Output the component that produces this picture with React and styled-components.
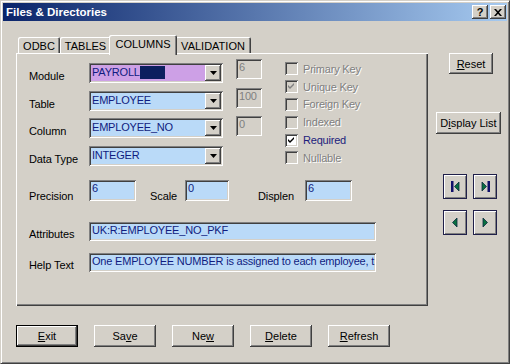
import React from 'react';
import styled, { createGlobalStyle, css } from 'styled-components';

const GlobalStyle = createGlobalStyle`
    body{
        margin:0;
        background:#d4d0c8;
        font-family:"Liberation Sans", Arial, sans-serif;
        font-size:11px;
    }
    *{ box-sizing:border-box; }
`;

const raised = css`
    box-shadow: inset -1px -1px #404040, inset 1px 1px #ffffff, inset -2px -2px #808080, inset 2px 2px #d4d0c8;
`;

const sunken = css`
    box-shadow: inset 1px 1px #808080, inset -1px -1px #ffffff, inset 2px 2px #404040, inset -2px -2px #d4d0c8;
`;

const Window = styled.div`
    width:510px;
    height:364px;
    padding:2px;
    background:#d4d0c8;
    border:1px solid;
    border-color:#d4d0c8 #404040 #404040 #d4d0c8;
    box-shadow: inset 1px 1px #ffffff, inset -1px -1px #808080;
    display:flex;
    flex-direction:column;
`;

const TitleBar = styled.div`
    height:18px;
    padding:0 1px 0 3px;
    display:flex;
    align-items:center;
    background:linear-gradient(to right, #0a246a, #a6caf0);
`;

const Title = styled.div`
    flex:1;
    color:#ffffff;
    font-weight:bold;
    font-size:11.5px;
`;

const CaptionButton = styled.div`
    width:16px;
    height:14px;
    margin-left:${p => p.$gap || 0}px;
    display:flex;
    align-items:center;
    justify-content:center;
    background:#d4d0c8;
    font-weight:bold;
    font-size:11px;
    color:#000;
    ${raised}
`;

const Content = styled.div`
    flex:1;
    padding:14px 0 0 13px;
    display:flex;
    flex-direction:column;
`;

const MainRow = styled.div`
    display:flex;
`;

const TabControl = styled.div`
    width:412px;
    display:flex;
    flex-direction:column;
`;

const TabStrip = styled.div`
    height:19px;
    padding-left:2px;
    display:flex;
    align-items:flex-end;
`;

const Tab = styled.div`
    height:${p => (p.$active ? 20 : 17)}px;
    width:${p => p.$w}px;
    margin:${p => (p.$active ? '0 -2px' : '0')};
    padding-top:3px;
    text-align:center;
    font-size:11px;
    color:#000;
    background:#d4d0c8;
    border-radius:2px 2px 0 0;
    box-shadow: inset 1px 1px #ffffff, inset -1px 0 #404040, inset -2px 0 #808080;
    ${p => p.$active && css`
        position:relative;
        z-index:2;
        margin-bottom:-1px;
    `}
`;

const Panel = styled.div`
    height:253px;
    margin-top:-1px;
    padding:0 13px;
    background:#d4d0c8;
    box-shadow: inset 1px 1px #ffffff, inset -1px -1px #404040, inset -2px -2px #808080;
`;

const TopSection = styled.div`
    height:114px;
    display:flex;
    align-items:flex-start;
`;

const FieldGrid = styled.div`
    margin-top:10px;
    display:grid;
    grid-template-columns:60px 134px;
    grid-auto-rows:20px;
    row-gap:7.5px;
`;

const Label = styled.div`
    width:${p => p.$w || 60}px;
    margin-left:${p => p.$ml || 0}px;
    padding-top:${p => p.$top || 7}px;
    line-height:13px;
    letter-spacing:-0.1px;
    color:#000;
    white-space:nowrap;
`;

const Combo = styled.div`
    height:20px;
    padding:3px 2px 0 3px;
    display:flex;
    align-items:flex-start;
    background:${p => p.$bg || '#badaf8'};
    color:#101c80;
    line-height:13px;
    letter-spacing:-0.2px;
    ${sunken}
`;

const ComboText = styled.div`
    flex:1;
    display:flex;
    white-space:nowrap;
    overflow:hidden;
`;

const Selection = styled.span`
    display:inline-block;
    width:25px;
    height:13px;
    background:#0c1f5f;
`;

const DropButton = styled.div`
    width:16px;
    height:16px;
    margin-top:-1px;
    display:flex;
    align-items:center;
    justify-content:center;
    background:#d4d0c8;
    ${raised}
`;

const SmallCol = styled.div`
    margin:6px 0 0 13px;
    display:flex;
    flex-direction:column;
    gap:8.5px;
`;

const Field = styled.div`
    width:${p => p.$w}px;
    height:${p => p.$h || 20}px;
    margin-left:${p => p.$ml || 0}px;
    padding:2px 3px 0;
    line-height:13px;
    letter-spacing:-0.2px;
    white-space:nowrap;
    overflow:hidden;
    background:${p => (p.$disabled ? '#d4d0c8' : '#badaf8')};
    color:${p => (p.$disabled ? '#808080' : '#101c80')};
    ${sunken}
`;

const CheckCol = styled.div`
    margin:7px 0 0 23px;
    display:flex;
    flex-direction:column;
`;

const CheckRow = styled.div`
    height:17.8px;
    display:flex;
    align-items:center;
`;

const CheckBox = styled.div`
    width:13px;
    height:13px;
    display:flex;
    align-items:center;
    justify-content:center;
    background:${p => (p.$disabled ? '#d4d0c8' : '#ffffff')};
    ${sunken}
`;

const CheckLabel = styled.span`
    margin-left:5px;
    letter-spacing:-0.2px;
    color:${p => (p.$disabled ? '#808080' : '#1c1c7c')};
    text-shadow:${p => (p.$disabled ? '1px 1px #ffffff' : 'none')};
`;

const Row = styled.div`
    margin-top:${p => p.$mt}px;
    display:flex;
    align-items:flex-start;
`;

const SidePanel = styled.div`
    width:70px;
    margin-left:8px;
    display:flex;
    flex-direction:column;
    align-items:flex-start;
`;

const Button = styled.div`
    width:${p => p.$w || 62}px;
    height:${p => p.$h || 22}px;
    margin-top:${p => p.$mt || 0}px;
    margin-left:${p => p.$ml || 0}px;
    display:flex;
    align-items:center;
    justify-content:center;
    background:#d4d0c8;
    color:#000;
    font-size:11px;
    ${raised}
    ${p => p.$default && css`
        border:1px solid #000;
        box-shadow: inset -1px -1px #404040, inset 1px 1px #ffffff, inset -2px -2px #808080;
    `}
    u{ text-decoration:underline; }
`;

const NavGrid = styled.div`
    margin:40px 0 0 7px;
    display:grid;
    grid-template-columns:24px 24px;
    grid-auto-rows:25px;
    column-gap:6px;
    row-gap:11px;
`;

const NavButton = styled.div`
    border:1px solid #20204a;
    background:#d4d0c8;
    box-shadow: inset 1px 1px #ffffff, inset -1px -1px #808080;
    display:flex;
`;

const ButtonRow = styled.div`
    margin-top:19px;
    display:flex;
    gap:16px;
`;

const Arrow = () => (
    <svg width="7" height="4" viewBox="0 0 7 4">
        <path d="M0 0h7L3.5 4z" fill="#000" />
    </svg>
);

const Check = ({ color }) => (
    <svg width="7" height="7" viewBox="0 0 7 7">
        <path d="M0 2L2 4L6 0V2L2 6L0 4z" fill={color} />
    </svg>
);

const NavIcon = ({ kind }) => {
    const tri = {
        first: '10.5,11.5 15,7 15,16',
        last: '8,7 8,16 12.5,11.5',
        prev: '8.5,11.5 13,7 13,16',
        next: '9,7 9,16 13.5,11.5',
    }[kind];
    return (
        <svg width="22" height="23" viewBox="0 0 22 23">
            {kind === 'first' && <rect x="7" y="6" width="2.5" height="11" fill="#10106a" />}
            {kind === 'last' && <rect x="13.5" y="6" width="2.5" height="11" fill="#10106a" />}
            <polygon points={tri} fill="#087040" stroke="#0b2a40" strokeWidth="0.8" />
        </svg>
    );
};

const combos = [
    { label: 'Module', value: 'PAYROLL', bg: '#cda0e6', sel: true },
    { label: 'Table', value: 'EMPLOYEE' },
    { label: 'Column', value: 'EMPLOYEE_NO' },
    { label: 'Data Type', value: 'INTEGER' },
];

const checks = [
    { label: 'Primary Key', disabled: true },
    { label: 'Unique Key', disabled: true, checked: true },
    { label: 'Foreign Key', disabled: true },
    { label: 'Indexed', disabled: true },
    { label: 'Required', checked: true },
    { label: 'Nullable', disabled: true },
];

const App = () => {
    return (
        <>
            <GlobalStyle />
            <Window>
                <TitleBar>
                    <Title>Files &amp; Directories</Title>
                    <CaptionButton>?</CaptionButton>
                    <CaptionButton $gap={2}>
                        <svg width="8" height="7" viewBox="0 0 8 7">
                            <path d="M0 0h2l2 2.2L6 0h2L5 3.5L8 7H6L4 4.8L2 7H0l3-3.5z" fill="#000" />
                        </svg>
                    </CaptionButton>
                </TitleBar>

                <Content>
                    <MainRow>
                        <TabControl>
                            <TabStrip>
                                <Tab $w={42}>ODBC</Tab>
                                <Tab $w={51}>TABLES</Tab>
                                <Tab $w={68} $active>COLUMNS</Tab>
                                <Tab $w={76}>VALIDATION</Tab>
                            </TabStrip>
                            <Panel>
                                <TopSection>
                                    <FieldGrid>
                                        {combos.map(c => (
                                            <React.Fragment key={c.label}>
                                                <Label>{c.label}</Label>
                                                <Combo $bg={c.bg}>
                                                    <ComboText>
                                                        {c.value}
                                                        {c.sel && <Selection />}
                                                    </ComboText>
                                                    <DropButton><Arrow /></DropButton>
                                                </Combo>
                                            </React.Fragment>
                                        ))}
                                    </FieldGrid>

                                    <SmallCol>
                                        <Field $w={26} $disabled>6</Field>
                                        <Field $w={26} $disabled>100</Field>
                                        <Field $w={26} $disabled>0</Field>
                                    </SmallCol>

                                    <CheckCol>
                                        {checks.map(c => (
                                            <CheckRow key={c.label}>
                                                <CheckBox $disabled={c.disabled}>
                                                    {c.checked && <Check color={c.disabled ? '#808080' : '#000'} />}
                                                </CheckBox>
                                                <CheckLabel $disabled={c.disabled}>{c.label}</CheckLabel>
                                            </CheckRow>
                                        ))}
                                    </CheckCol>
                                </TopSection>

                                <Row $mt={13}>
                                    <Label $top={10}>Precision</Label>
                                    <Field $w={47} $h={21}>6</Field>
                                    <Label $top={10} $ml={14} $w={35}>Scale</Label>
                                    <Field $w={44} $h={21}>0</Field>
                                    <Label $top={10} $ml={29} $w={47}>Displen</Label>
                                    <Field $w={47} $h={21}>6</Field>
                                </Row>

                                <Row $mt={19}>
                                    <Label $top={6}>Attributes</Label>
                                    <Field $w={287} $h={19}>UK:R:EMPLOYEE_NO_PKF</Field>
                                </Row>

                                <Row $mt={12}>
                                    <Label $top={6}>Help Text</Label>
                                    <Field $w={287} $h={19}>One EMPLOYEE NUMBER is assigned to each employee, t</Field>
                                </Row>
                            </Panel>
                        </TabControl>

                        <SidePanel>
                            <Button $w={44} $h={21} $mt={18} $ml={13}><span><u>R</u>eset</span></Button>
                            <Button $w={65} $mt={38}><span>D<u>i</u>splay List</span></Button>
                            <NavGrid>
                                <NavButton><NavIcon kind="first" /></NavButton>
                                <NavButton><NavIcon kind="last" /></NavButton>
                                <NavButton><NavIcon kind="prev" /></NavButton>
                                <NavButton><NavIcon kind="next" /></NavButton>
                            </NavGrid>
                        </SidePanel>
                    </MainRow>

                    <ButtonRow>
                        <Button $default><span><u>E</u>xit</span></Button>
                        <Button><span>Sa<u>v</u>e</span></Button>
                        <Button><span>Ne<u>w</u></span></Button>
                        <Button><span><u>D</u>elete</span></Button>
                        <Button><span><u>R</u>efresh</span></Button>
                    </ButtonRow>
                </Content>
            </Window>
        </>
    );
};

export default App;
